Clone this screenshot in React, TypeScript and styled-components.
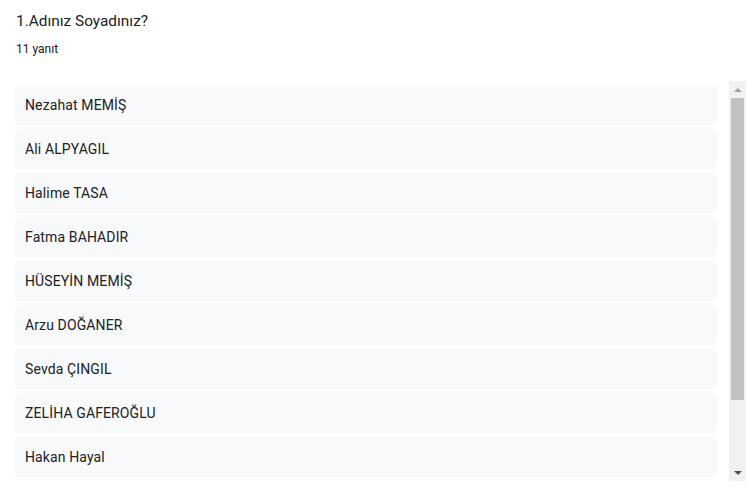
import React from 'react';
import styled, { createGlobalStyle } from 'styled-components';

const GlobalStyle = createGlobalStyle`
  html, body {
    margin: 0;
    padding: 0;
    background: #ffffff;
  }
  body {
    font-family: Roboto, "Noto Sans", Arial, sans-serif;
    color: #202124;
  }
`;

// only the rows that fit in the visible part of the list
const answers = [
  'Nezahat MEMİŞ',
  'Ali ALPYAGIL',
  'Halime TASA',
  'Fatma BAHADIR',
  'HÜSEYİN MEMİŞ',
  'Arzu DOĞANER',
  'Sevda ÇINGIL',
  'ZELİHA GAFEROĞLU',
  'Hakan Hayal',
];

const Page = styled.div`
  width: 756px;
  height: 493px;
  box-sizing: border-box;
  padding: 9px 10px 0 15px;
  overflow: hidden;
`;

const Title = styled.div`
  font-size: 15.4px;
  line-height: 24px;
  padding-left: 1px;
`;

const Count = styled.div`
  margin-top: 8px;
  font-size: 12px;
  line-height: 16px;
  padding-left: 1px;
`;

const ListArea = styled.div`
  margin-top: 24px;
  height: 400px;
  display: flex;
`;

const List = styled.div`
  flex: 1;
  overflow: hidden;
  display: flex;
  flex-direction: column;
  gap: 4px;
  padding-top: 4px;
  padding-right: 12px;
`;

const Item = styled.div`
  flex-shrink: 0;
  height: 40px;
  box-sizing: border-box;
  padding: 0 10px;
  display: flex;
  align-items: center;
  background: #f8f9fa;
  border-radius: 4px;
  font-size: 14px;
  letter-spacing: 0.12px;
  color: #202124;
`;

const Scrollbar = styled.div`
  width: 17px;
  background: #f1f1f1;
  display: flex;
  flex-direction: column;
  align-items: center;
`;

const ArrowButton = styled.div`
  height: 17px;
  width: 100%;
  display: flex;
  align-items: center;
  justify-content: center;
`;

const Triangle = styled.div<{ $dir: 'up' | 'down' }>`
  width: 0;
  height: 0;
  border-left: 4px solid transparent;
  border-right: 4px solid transparent;
  ${({ $dir }) =>
    $dir === 'up'
      ? 'border-bottom: 4px solid #a3a3a3;'
      : 'border-top: 4px solid #505050;'}
`;

const Track = styled.div`
  flex: 1;
  width: 100%;
  box-sizing: border-box;
  padding: 0 2px;
`;

const Thumb = styled.div`
  height: 302px;
  background: #c1c1c1;
`;

const App: React.FC = () => {
  return (
    <>
      <GlobalStyle />
      <Page>
        <Title>1.Adınız Soyadınız?</Title>
        <Count>11 yanıt</Count>
        <ListArea>
          <List>
            {answers.map((name, i) => (
              <Item key={i}>{name}</Item>
            ))}
          </List>
          <Scrollbar>
            <ArrowButton>
              <Triangle $dir="up" />
            </ArrowButton>
            <Track>
              <Thumb />
            </Track>
            <ArrowButton>
              <Triangle $dir="down" />
            </ArrowButton>
          </Scrollbar>
        </ListArea>
      </Page>
    </>
  );
};

export default App;
